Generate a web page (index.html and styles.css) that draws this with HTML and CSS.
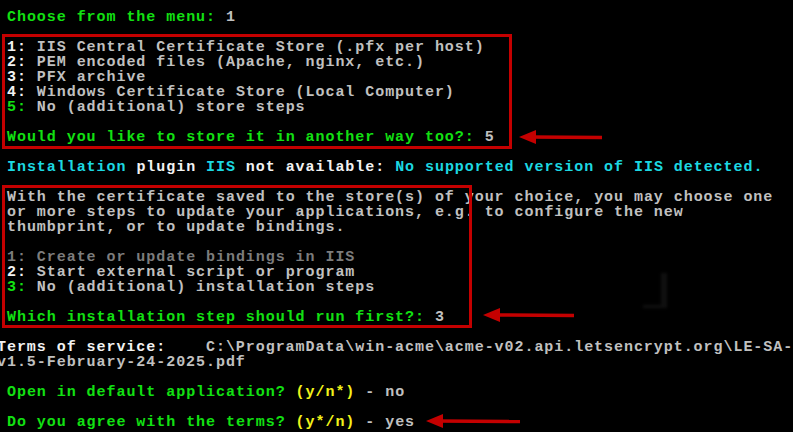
FILE: index.html
```html
<!DOCTYPE html>
<html>
<head>
<meta name="viewport" content="width=device-width, initial-scale=1">
<link rel="stylesheet" href="styles.css">
</head>
<body>

<div class="screen">
  <div class="console">
    <div class="ln"><span class="g">Choose from the menu:</span> <span class="t">1</span></div>
    <div class="ln"></div>
    <div class="ln"><span class="w">1:</span> <span class="t">IIS Central Certificate Store (.pfx per host)</span></div>
    <div class="ln"><span class="w">2:</span> <span class="t">PEM encoded files (Apache, nginx, etc.)</span></div>
    <div class="ln"><span class="w">3:</span> <span class="t">PFX archive</span></div>
    <div class="ln"><span class="w">4:</span> <span class="t">Windows Certificate Store (Local Computer)</span></div>
    <div class="ln"><span class="g">5:</span> <span class="t">No (additional) store steps</span></div>
    <div class="ln"></div>
    <div class="ln"><span class="g">Would you like to store it in another way too?:</span> <span class="t">5</span></div>
    <div class="ln"></div>
    <div class="ln"><span class="c">Installation</span> <span class="w">plugin</span> <span class="c">IIS</span> <span class="w">not available:</span> <span class="c">No supported version of IIS detected.</span></div>
    <div class="ln"></div>
    <div class="ln t">With the certificate saved to the store(s) of your choice, you may choose one</div>
    <div class="ln t">or more steps to update your applications, e.g. to configure the new</div>
    <div class="ln t">thumbprint, or to update bindings.</div>
    <div class="ln"></div>
    <div class="ln d">1: Create or update bindings in IIS</div>
    <div class="ln"><span class="w">2:</span> <span class="t">Start external script or program</span></div>
    <div class="ln"><span class="g">3:</span> <span class="t">No (additional) installation steps</span></div>
    <div class="ln"></div>
    <div class="ln"><span class="g">Which installation step should run first?:</span> <span class="t">3</span></div>
    <div class="ln"></div>
    <div class="ln flush"><span class="w">Terms of service:</span>    <span class="t">C:\ProgramData\win-acme\acme-v02.api.letsencrypt.org\LE-SA-</span></div>
    <div class="ln flush t">v1.5-February-24-2025.pdf</div>
    <div class="ln"></div>
    <div class="ln"><span class="g">Open in default application?</span> <span class="y">(y/n*)</span> <span class="t">- no</span></div>
    <div class="ln"></div>
    <div class="ln"><span class="g">Do you agree with the terms?</span> <span class="y">(y*/n)</span> <span class="t">- yes</span></div>
  </div>

  <!-- leftover window shadow from the screenshot -->
  <div class="ghost"></div>

  <!-- red annotations drawn over the console -->
  <svg class="notes" width="793" height="432" viewBox="0 0 793 432">
    <rect class="box" x="3.5" y="35.5" width="507" height="112"/>
    <rect class="box" x="3.5" y="186.5" width="467" height="140"/>

    <line class="shaft" x1="530" y1="137" x2="602" y2="137.5"/>
    <polygon class="head" points="519,137 536,130 536,144"/>

    <line class="shaft" x1="494" y1="315" x2="574" y2="315.5"/>
    <polygon class="head" points="483,315 500,308 500,322"/>

    <line class="shaft" x1="437" y1="421" x2="520" y2="421.5"/>
    <polygon class="head" points="426,421 443,414 443,428"/>
  </svg>
</div>

</body>
</html>
```

FILE: styles.css
```css
* {
  box-sizing: border-box;
}

body {
  margin: 0;
  background-color: #000;
  overflow: hidden;
}

.screen {
  position: relative;
  width: 793px;
  height: 432px;
  overflow: hidden;
  background-color: #000;
}

.console {
  padding-top: 10px;
  font-family: "Liberation Mono", "DejaVu Sans Mono", monospace;
  font-weight: bold;
  font-size: 15px;
  letter-spacing: 0.95px;
  color: #c0c0c0;
}

.ln {
  height: 15px;
  line-height: 15px;
  padding-left: 7px;
  white-space: pre;
}

/* the wrapped path lines start in column 0, half off screen */
.ln.flush {
  padding-left: 0;
  margin-left: -3px;
}

/* console colours */
.g { color: #12e012; }
.t { color: #c0c0c0; }
.w { color: #f2f2f2; }
.d { color: #7c7c7c; }
.c { color: #1cd8e2; }
.y { color: #f2f21a; }

.ghost {
  position: absolute;
  left: 643px;
  top: 273px;
  width: 24px;
  height: 35px;
  border-right: 6px solid #101010;
  border-bottom: 3px solid #101010;
  filter: blur(1.5px);
}

.notes {
  position: absolute;
  left: 0;
  top: 0;
}

.box {
  fill: none;
  stroke: #c40000;
  stroke-width: 3;
}

.shaft {
  stroke: #c40000;
  stroke-width: 3.5;
}

.head {
  fill: #c40000;
}
```
